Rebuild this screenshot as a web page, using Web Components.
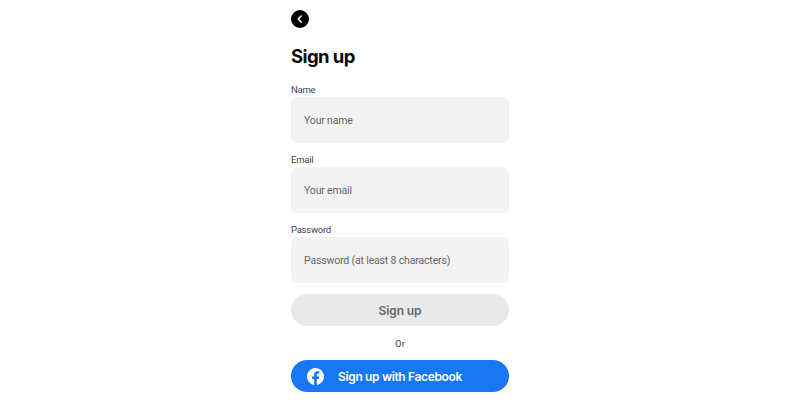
<!DOCTYPE html>
<html>
<head>
<meta charset="utf-8">
<style>
  html, body { margin: 0; background: #fff; }
  body { font-family: Roboto, "Liberation Sans", sans-serif; }
</style>
</head>
<body>
<signup-form></signup-form>
<script>
class BackButton extends HTMLElement {
    constructor() {
        super();
        this.attachShadow({ mode: "open" });
        this.shadowRoot.innerHTML = `
            <style>
                :host { display: flex; width: 18px; height: 18px; border-radius: 50%; background: #000; align-items: center; justify-content: center; }
                svg { display: block; }
            </style>
            <svg width="10" height="10" viewBox="0 0 10 10" fill="none" stroke="#fff" stroke-width="1.6" stroke-linecap="round" stroke-linejoin="round">
                <path d="M6.2 2 L3.2 5 L6.2 8"/>
            </svg>
        `;
    }
}

class FormField extends HTMLElement {
    constructor() {
        super();
        this.attachShadow({ mode: "open" });
        this.shadowRoot.innerHTML = `
            <style>
                :host { display: block; }
                .label { font-size: 9.5px; line-height: 13px; height: 13px; margin-bottom: 1px; letter-spacing: -0.25px; color: #444; }
                .box {
                    height: 46px;
                    padding: 1px 0 0 13px;
                    box-sizing: border-box;
                    display: flex;
                    align-items: center;
                    background: #f3f3f3;
                    border-radius: 7px;
                    font-size: 10.5px;
                    letter-spacing: -0.16px;
                    color: #666;
                }
            </style>
            <div class="label">${this.dataset.label}</div>
            <div class="box"><slot></slot></div>
        `;
    }
}

class PillButton extends HTMLElement {
    constructor() {
        super();
        this.attachShadow({ mode: "open" });
        this.shadowRoot.innerHTML = `
            <style>
                :host {
                    display: flex;
                    position: relative;
                    height: 32px;
                    align-items: center;
                    justify-content: center;
                    border-radius: 16px;
                    background: var(--pill-bg, #e9e9e9);
                    color: var(--pill-color, #66666b);
                    font-family: Inter, "Liberation Sans", sans-serif;
                    font-size: 12px;
                    font-weight: 600;
                    letter-spacing: -0.1px;
                }
                ::slotted(svg) { position: absolute; left: 16px; top: 7.5px; }
            </style>
            <slot name="icon"></slot>
            <slot></slot>
        `;
    }
}

class SignupForm extends HTMLElement {
    constructor() {
        super();
        this.attachShadow({ mode: "open" });
        this.shadowRoot.innerHTML = `
            <style>
                :host { display: block; width: 218px; margin: 0 auto; padding-top: 10px; }
                h1 { margin: 18px 0 17px; font-family: Inter, "Liberation Sans", sans-serif; font-size: 18.5px; line-height: 20px; font-weight: 700; color: #0b0b0b; letter-spacing: -0.6px; }
                .fields { display: flex; flex-direction: column; gap: 10px; }
                .or { font-size: 9.5px; line-height: 12px; text-align: center; color: #444; margin: 12px 0 10px; }
                .signup { margin-top: 11px; }
                .fb { --pill-bg: #1877f2; --pill-color: #fff; letter-spacing: -0.35px; }
            </style>
            <back-button></back-button>
            <h1>Sign up</h1>
            <div class="fields">
                <form-field data-label="Name">Your name</form-field>
                <form-field data-label="Email">Your email</form-field>
                <form-field data-label="Password">Password (at least 8 characters)</form-field>
            </div>
            <pill-button class="signup">Sign up</pill-button>
            <div class="or">Or</div>
            <pill-button class="fb">
                <svg slot="icon" width="17" height="17" viewBox="0 0 24 24" fill="#fff">
                    <path d="M24 12.07C24 5.4 18.63 0 12 0S0 5.4 0 12.07c0 6.03 4.39 11.02 10.13 11.93v-8.44H7.08v-3.49h3.05V9.41c0-3.02 1.79-4.69 4.53-4.69 1.31 0 2.69.24 2.69.24v2.97h-1.51c-1.49 0-1.96.93-1.96 1.89v2.25h3.33l-.53 3.49h-2.8V24C19.61 23.09 24 18.1 24 12.07z"/>
                </svg>
                <span>Sign up with Facebook</span>
            </pill-button>
        `;
    }
}

customElements.define("back-button", BackButton);
customElements.define("form-field", FormField);
customElements.define("pill-button", PillButton);
customElements.define("signup-form", SignupForm);
</script>
</body>
</html>
